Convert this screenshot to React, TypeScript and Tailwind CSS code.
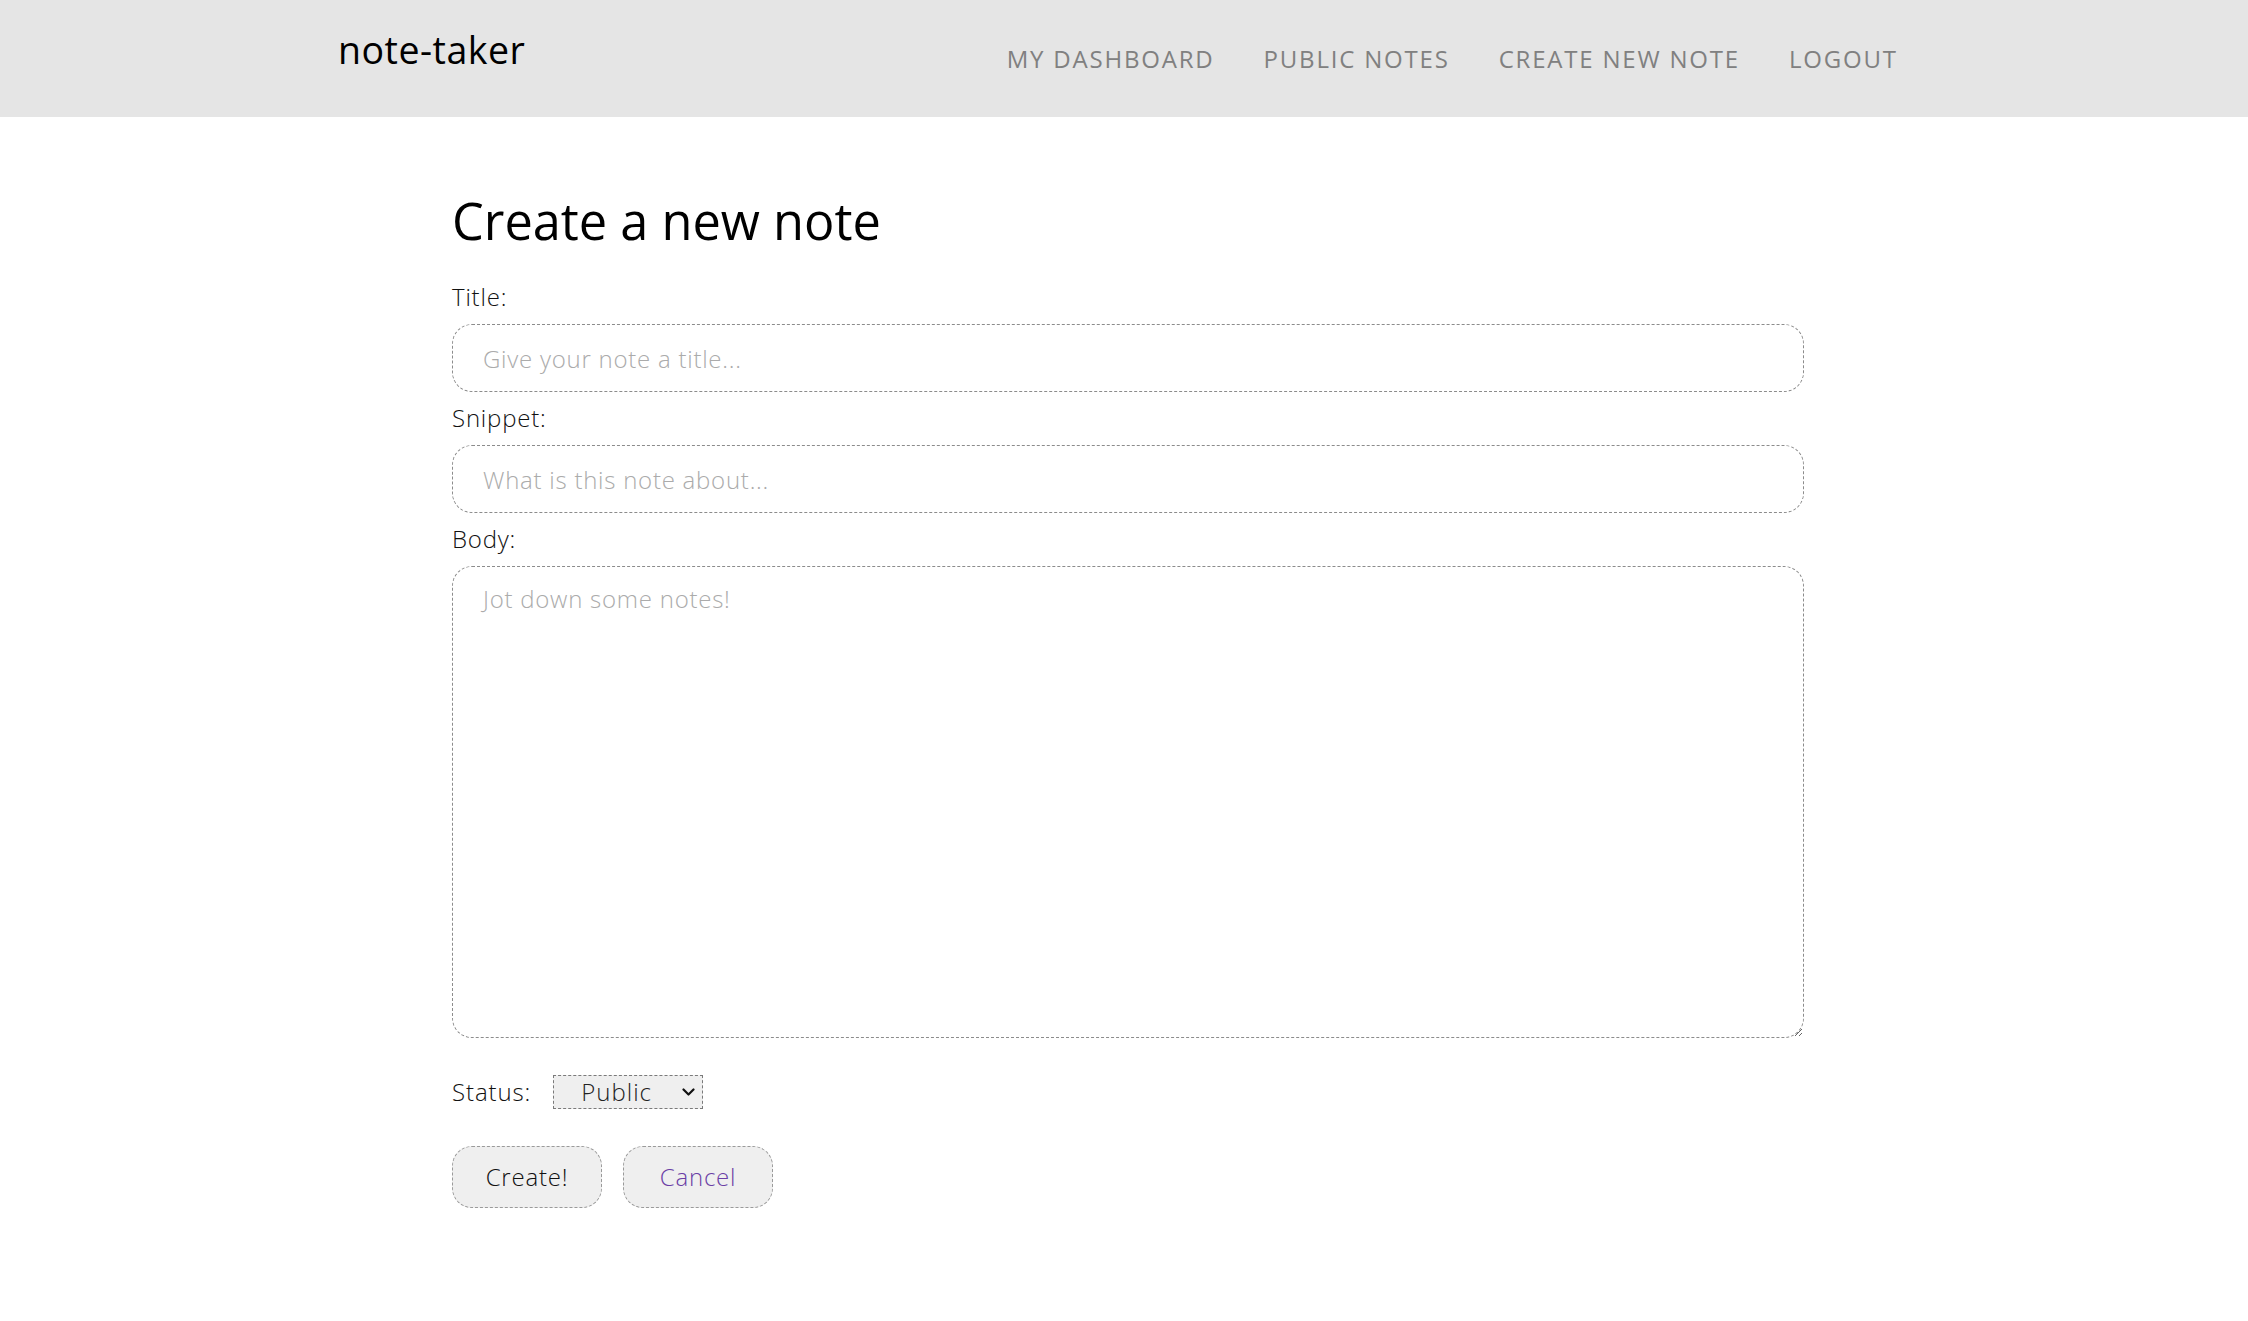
import React from "react";

export default function App() {
  return (
    <div
      className="min-h-[1321px] w-full bg-white text-[#111]"
      style={{ fontFamily: '"Open Sans", "Liberation Sans", sans-serif' }}
    >
      <header className="h-[117px] w-full bg-[#e5e5e5]">
        <div className="flex h-full items-start pl-[338px] pr-[352px]">
          <div className="pt-[31px] text-[37.5px] leading-[37.5px] tracking-[0.5px] font-normal text-black">
            note-taker
          </div>
          <nav className="ml-auto mt-[47px] flex gap-[49px] text-[24px] leading-[24px] tracking-[1.8px] text-[#808080]">
            <a href="#" className="whitespace-nowrap">MY DASHBOARD</a>
            <a href="#" className="whitespace-nowrap">PUBLIC NOTES</a>
            <a href="#" className="whitespace-nowrap">CREATE NEW NOTE</a>
            <a href="#" className="-mr-[1.8px] whitespace-nowrap">LOGOUT</a>
          </nav>
        </div>
      </header>

      <main className="pl-[452px] pt-[74px]">
        <div className="flex w-[1352px] flex-col">
          <h1 className="text-[50.5px] leading-[60px] font-normal text-black">Create a new note</h1>

          <label className="mt-[28px] text-[24px] leading-[36px] tracking-[0.8px] font-light">Title:</label>
          <input
            type="text"
            placeholder="Give your note a title..."
            className="mt-[9px] h-[68px] w-full rounded-[20px] border border-dashed border-[#8c8c8c] bg-white pl-[30px] text-[24px] tracking-[0.75px] font-light outline-none placeholder:text-[#ababab]"
          />

          <label className="mt-[8px] text-[24px] leading-[36px] tracking-[0.8px] font-light">Snippet:</label>
          <input
            type="text"
            placeholder="What is this note about..."
            className="mt-[9px] h-[68px] w-full rounded-[20px] border border-dashed border-[#8c8c8c] bg-white pl-[30px] text-[24px] tracking-[0.75px] font-light outline-none placeholder:text-[#ababab]"
          />

          <label className="mt-[8px] text-[24px] leading-[36px] tracking-[0.8px] font-light">Body:</label>
          <textarea
            placeholder="Jot down some notes!"
            className="mt-[9px] h-[472px] w-full rounded-[20px] border border-dashed border-[#8c8c8c] bg-white px-[30px] py-[14px] text-[24px] leading-[36px] tracking-[0.75px] font-light outline-none placeholder:text-[#ababab]"
          />

          <div className="mt-[37px] flex h-[34px] items-center gap-[22px]">
            <span className="text-[24px] leading-[34px] tracking-[0.9px] font-light">Status:</span>
            <div className="relative h-[34px] w-[150px]">
              <select
                defaultValue="Public"
                className="h-[34px] w-[150px] appearance-none border border-dashed border-[#7a7a7a] bg-[#efefef] pl-[27px] text-[24px] leading-[32px] tracking-[1px] font-light text-[#222] outline-none"
              >
                <option>Public</option>
                <option>Private</option>
              </select>
              <svg
                className="pointer-events-none absolute right-[8px] top-[13px]"
                width="13"
                height="9"
                viewBox="0 0 13 9"
                fill="none"
              >
                <path d="M1.5 1.5 L6.5 6.5 L11.5 1.5" stroke="#111" strokeWidth="2.2" strokeLinecap="round" strokeLinejoin="round" />
              </svg>
            </div>
          </div>

          <div className="mt-[37px] flex gap-[21px]">
            <button className="h-[62px] w-[150px] rounded-[20px] border border-dashed border-[#9a9a9a] bg-[#efefef] text-[24px] tracking-[0.8px] font-light text-[#111]">
              Create!
            </button>
            <a
              href="#"
              className="flex h-[62px] w-[150px] items-center justify-center rounded-[20px] border border-dashed border-[#9a9a9a] bg-[#efefef] text-[24px] tracking-[0.8px] font-light text-[#6b3fa6]"
            >
              Cancel
            </a>
          </div>
        </div>
      </main>
    </div>
  );
}
